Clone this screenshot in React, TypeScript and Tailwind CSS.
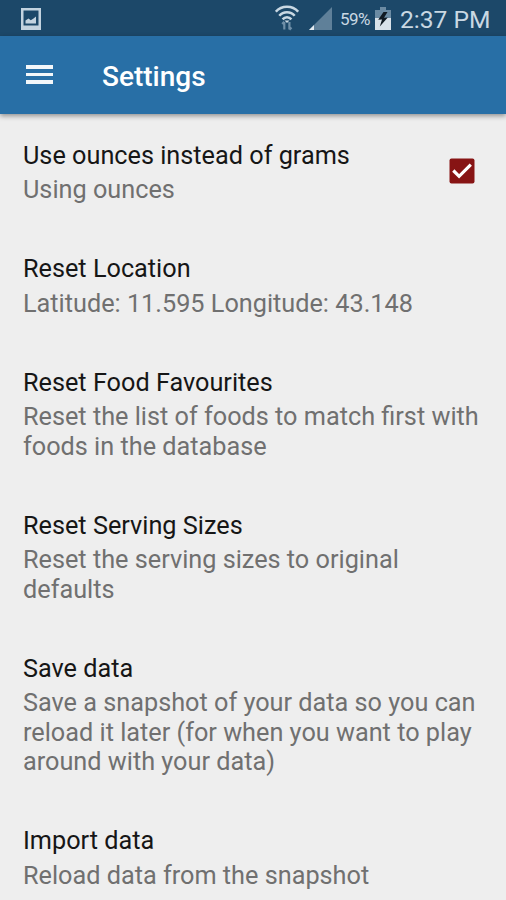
import React from "react";

interface Setting {
  title: string;
  lines: string[];
  checked?: boolean;
}

const settings: Setting[] = [
  { title: "Use ounces instead of grams", lines: ["Using ounces"], checked: true },
  { title: "Reset Location", lines: ["Latitude: 11.595 Longitude: 43.148"] },
  {
    title: "Reset Food Favourites",
    lines: ["Reset the list of foods to match first with", "foods in the database"],
  },
  {
    title: "Reset Serving Sizes",
    lines: ["Reset the serving sizes to original", "defaults"],
  },
  {
    title: "Save data",
    lines: [
      "Save a snapshot of your data so you can",
      "reload it later (for when you want to play",
      "around with your data)",
    ],
  },
  { title: "Import data", lines: ["Reload data from the snapshot"] },
];

const PictureIcon = () => (
  <svg className="w-5 h-[22px]" viewBox="0 0 20 22">
    <path d="M0 0h20v22H0zM2.500 2.500v15h15v-15z" fill="#c3d3df" fillRule="evenodd" />
    <path d="M4.500 15.500v-3l3-2 2.300 1.800 2.700-1.800 2.500-2v7z" fill="#c3d3df" />
  </svg>
);

const WifiIcon = () => (
  <svg className="w-6 h-[26px]" viewBox="0 0 24 26" fill="none" stroke="#c9d8e3" strokeWidth="2.500">
    <path d="M.8 6.800C6.500.1 17.500.1 23.200 6.800" />
    <path d="M4.300 10.800c4-4.700 11.400-4.700 15.400 0" />
    <path d="M7.600 14.400c2.400-2.800 6.400-2.800 8.800 0" />
    <path d="M9.500 15.500h5L12 18z" fill="#c9d8e3" stroke="none" />
    <path d="M9.300 24.500v-7.500M7.200 19l2.100-2.200M14.400 17v7.500M16.500 22.500l-2.100 2.200" stroke="#6f8fa8" strokeWidth="2.200" />
  </svg>
);

const SignalIcon = () => (
  <svg className="w-[23px] h-[23px]" viewBox="0 0 23 23">
    <path d="M0 23 23 0v23z" fill="#5f8099" />
    <path d="M0 23l5-5v5z" fill="#e3ebf1" />
  </svg>
);

const BatteryIcon = () => (
  <svg className="w-4 h-[23px]" viewBox="0 0 16 23">
    <path d="M5 0h6v3h5v8H0V3h5z" fill="#6b8ba3" />
    <path d="M0 11h16v12H0z" fill="#d9e2e9" />
    <path d="M8.500 5 3.200 12.800 7 12.600 4.800 19.500 12.800 10.500 9 10.700 12.500 5z" fill="#101a22" />
  </svg>
);

const StatusBar = () => (
  <div className="h-9 bg-[#1c4869] flex items-start text-[#c9d8e3]">
    <div className="pl-[21px] pt-2">
      <PictureIcon />
    </div>
    <div className="ml-auto flex items-start whitespace-nowrap">
      <div className="pt-[5px]">
        <WifiIcon />
      </div>
      <div className="pt-[7px] ml-[10px]">
        <SignalIcon />
      </div>
      <span className="w-[31px] ml-2 pt-2 text-[17px] leading-[22px] tracking-[-0.6px]">59%</span>
      <div className="pt-[7px] ml-1">
        <BatteryIcon />
      </div>
      <span className="w-[90px] ml-[9px] mr-4 pt-1 text-[24.600px] leading-[31px]">2:37 PM</span>
    </div>
  </div>
);

const AppBar = () => (
  <header className="relative h-[78px] bg-[#286fa6] flex items-center shadow-[0_2px_5px_rgba(0,0,0,0.4)]">
    <button className="ml-[26px] w-[27px] flex flex-col gap-1 -mt-px" aria-label="Menu">
      <span className="w-full h-[3.500px] bg-[#f3f7fa]" />
      <span className="w-full h-[3.500px] bg-[#f3f7fa]" />
      <span className="w-full h-[3.500px] bg-[#f3f7fa]" />
    </button>
    <h1 className="ml-[49px] mt-1 text-[28px] leading-8 font-medium text-white">Settings</h1>
  </header>
);

const Checkbox = () => (
  <svg className="w-[26px] h-[26px] mb-[2px]" viewBox="0 0 26 26">
    <rect x=".5" y=".5" width="25" height="25" rx="2" fill="#871414" />
    <path d="m4.300 12.500 5.800 5.800L21.800 6.600" fill="none" stroke="#fff" strokeWidth="3.200" />
  </svg>
);

const SettingRow: React.FC<{ setting: Setting }> = ({ setting }) => (
  <li className="flex items-center pl-[23px] pr-[31px] pt-[25px] pb-[22.700px]">
    <div className="flex-1 whitespace-nowrap">
      <h2 className="mb-[2.300px] text-[25.250px] leading-[34px] text-[#161616]">{setting.title}</h2>
      {setting.lines.map((line) => (
        <p className="text-[25.250px] leading-[29.500px] text-[#707070]" key={line}>
          {line}
        </p>
      ))}
    </div>
    {setting.checked && <Checkbox />}
  </li>
);

export default function App() {
  return (
    <div className="w-[506px] h-[900px] overflow-hidden bg-[#eeeeee] font-['Roboto',sans-serif]">
      <StatusBar />
      <AppBar />
      <ul>
        {settings.map((setting) => (
          <SettingRow setting={setting} key={setting.title} />
        ))}
      </ul>
    </div>
  );
}
